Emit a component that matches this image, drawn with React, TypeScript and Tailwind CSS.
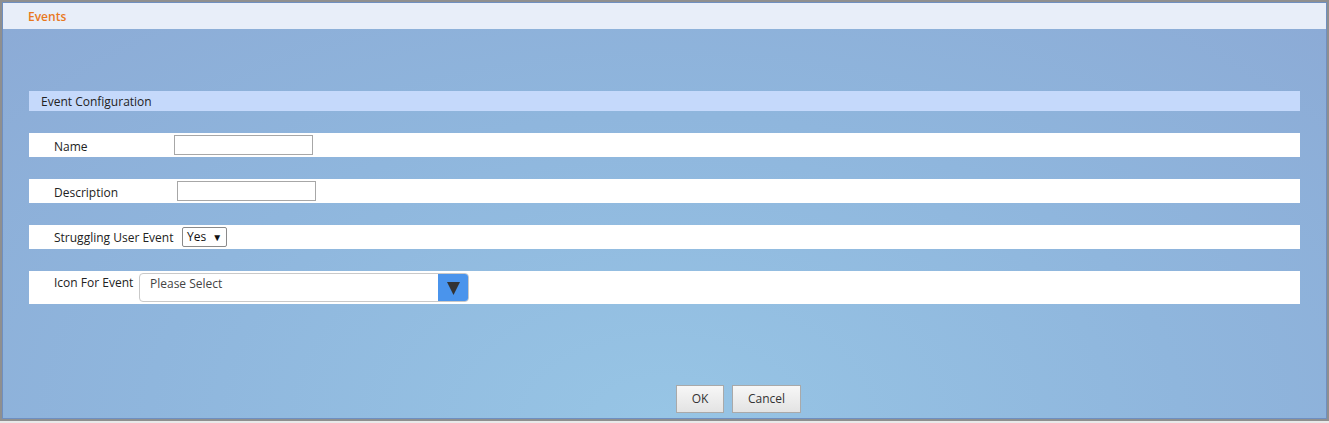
export default function App() {
  return (
    <div className="w-[1329px] h-[423px] bg-[#e9e9e9] font-['Open_Sans',sans-serif] text-[12px] text-[#222]">
      <div className="h-[421px] border-2 border-[#8f8f8f] flex flex-col">
        <div className="flex-1 border border-[#6f8fc0] flex flex-col">
          <div className="h-[26px] bg-[#e8eef9] flex items-center pl-[25px] pt-[2px]">
            <span className="text-[#e8781e] font-semibold text-[12px] leading-none">Events</span>
          </div>
          <div className="flex-1 bg-[radial-gradient(ellipse_at_50%_100%,#97c5e5_0%,#8fb6dd_55%,#8cabd6_100%)] pt-[62px] pl-[26px] pr-[26px] flex flex-col">
            <div className="h-[20px] bg-[#c5d9fb] flex items-center pl-[12px] pt-[2px] text-[#222]">Event Configuration</div>

            <div className="mt-[22px] h-[24px] bg-white flex items-center pl-[25px]">
              <span className="w-[120px] pt-[3px]">Name</span>
              <input className="w-[139px] h-[20px] border border-[#a7a7a7] bg-white outline-none" />
            </div>

            <div className="mt-[22px] h-[24px] bg-white flex items-center pl-[25px]">
              <span className="w-[123px] pt-[3px]">Description</span>
              <input className="w-[139px] h-[20px] border border-[#a7a7a7] bg-white outline-none" />
            </div>

            <div className="mt-[22px] h-[24px] bg-white flex items-center pl-[25px]">
              <span className="w-[128px] pt-[2px]">Struggling User Event</span>
              <div className="w-[45px] h-[20px] border border-[#8a8a8a] rounded-[2px] flex items-center pl-[4px] gap-[6px]">
                <span className="text-[12px] text-[#111]">Yes</span>
                <span className="text-[10px] text-[#111] leading-none">▼</span>
              </div>
            </div>

            <div className="mt-[22px] h-[33px] bg-white flex items-start pl-[25px]">
              <span className="w-[85px] pt-[3px]">Icon For Event</span>
              <div className="mt-[2px] w-[330px] h-[29px] border border-[#c9c9c9] rounded-[4px] flex overflow-hidden">
                <span className="flex-1 pl-[10px] pt-[1px] text-[#444]">Please Select</span>
                <div className="w-[30px] h-full bg-[#4a94ec] flex items-center justify-center">
                  <svg width="13" height="14" viewBox="0 0 13 14">
                    <polygon points="0,1 13,1 6.5,14" fill="#333" />
                  </svg>
                </div>
              </div>
            </div>

            <div className="flex-1" />
            <div className="flex gap-[8px] pl-[647px] pb-[5px]">
              <button className="w-[48px] h-[28px] border border-[#a9a9a9] bg-[linear-gradient(#f7f7f7,#e3e3e3)] text-[#333] text-[12px]">OK</button>
              <button className="w-[69px] h-[28px] border border-[#a9a9a9] bg-[linear-gradient(#f7f7f7,#e3e3e3)] text-[#333] text-[12px]">Cancel</button>
            </div>
          </div>
        </div>
      </div>
    </div>
  )
}
